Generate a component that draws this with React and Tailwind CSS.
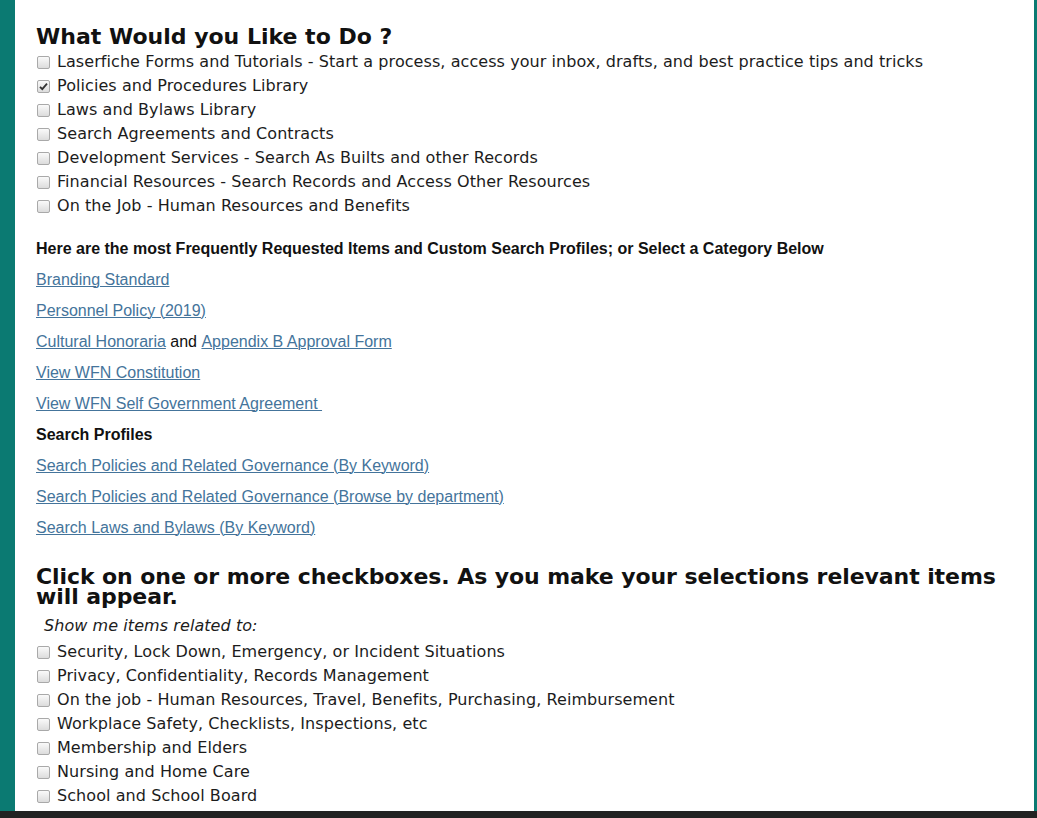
import React from "react";

const verdana = { fontFamily: '"DejaVu Sans", Verdana, sans-serif' };

function Box({ checked }) {
  return (
    <span className="relative mr-[7px] inline-block h-[13px] w-[13px] shrink-0 rounded-[2px] border border-[#a9a9a9] bg-gradient-to-b from-[#fafafa] to-[#dcdcdc]">
      {checked && (
        <svg viewBox="0 0 13 13" className="absolute left-[-1px] top-[-1px] h-[13px] w-[13px]">
          <path d="M3 6.8 L5.3 9.2 L10 3.6" fill="none" stroke="#333" strokeWidth="1.8" />
        </svg>
      )}
    </span>
  );
}

function Row({ children, checked }) {
  return (
    <div className="flex h-[24px] items-center pl-[1px] font-['DejaVu_Sans',sans-serif] text-[16px] tracking-[0.07px] text-[#1c1c1c]">
      <Box checked={checked} />
      <span className="whitespace-nowrap">{children}</span>
    </div>
  );
}

function L({ children }) {
  return <a href="#" className="text-[#44749b] underline decoration-1 underline-offset-[1px]">{children}</a>;
}

function LinkRow({ children }) {
  return <div className="flex h-[31px] items-center whitespace-nowrap">{children}</div>;
}

export default function App() {
  const top = [
    "Laserfiche Forms and Tutorials - Start a process, access your inbox, drafts, and best practice tips and tricks",
    "Policies and Procedures Library",
    "Laws and Bylaws Library",
    "Search Agreements and Contracts",
    "Development Services - Search As Builts and other Records",
    "Financial Resources - Search Records and Access Other Resources",
    "On the Job - Human Resources and Benefits",
  ];
  const bottom = [
    "Security, Lock Down, Emergency, or Incident Situations",
    "Privacy, Confidentiality, Records Management",
    "On the job - Human Resources, Travel, Benefits, Purchasing, Reimbursement",
    "Workplace Safety, Checklists, Inspections, etc",
    "Membership and Elders",
    "Nursing and Home Care",
    "School and School Board",
  ];
  return (
    <div className="flex h-[818px] w-[1037px] flex-col overflow-hidden bg-[#0b7a72]">
      <div className="flex flex-1">
        <div className="w-[15px] shrink-0 bg-[#0b7a72]" />
        <div className="flex-1 bg-white pl-[21px] pt-[27px]">
          <h1 className="h-[20px] text-[22px] font-bold leading-[20px] text-[#111]" style={verdana}>
            What Would you Like to Do ?
          </h1>
          <div className="mt-[3px]">
            {top.map((t, i) => (
              <Row key={i} checked={i === 1}>{t}</Row>
            ))}
          </div>
          <div className="mt-[15px] font-['Liberation_Sans',Arial,sans-serif] text-[16px] text-[#111]">
            <LinkRow>
              <span className="font-bold">Here are the most Frequently Requested Items and Custom Search Profiles; or Select a Category Below</span>
            </LinkRow>
            <LinkRow><L>Branding Standard</L></LinkRow>
            <LinkRow><L>Personnel Policy (2019)</L></LinkRow>
            <LinkRow>
              <L>Cultural Honoraria</L>
              <span className="whitespace-pre"> and </span>
              <L>Appendix B Approval Form</L>
            </LinkRow>
            <LinkRow><L>View WFN Constitution</L></LinkRow>
            <LinkRow><L>View WFN Self Government Agreement&nbsp;</L></LinkRow>
            <LinkRow><span className="font-bold">Search Profiles</span></LinkRow>
            <LinkRow><L>Search Policies and Related Governance (By Keyword)</L></LinkRow>
            <LinkRow><L>Search Policies and Related Governance (Browse by department)</L></LinkRow>
            <LinkRow><L>Search Laws and Bylaws (By Keyword)</L></LinkRow>
          </div>
          <h2 className="mt-[24px] w-[975px] text-[22px] font-bold leading-[20px] tracking-[-0.08px] text-[#111]" style={verdana}>
            Click on one or more checkboxes. As you make your selections relevant items will appear.
          </h2>
          <div className="mt-[7px] flex h-[24px] items-center pl-[8px] text-[16px] italic tracking-[0.07px] text-[#1c1c1c]" style={verdana}>
            Show me items related to:
          </div>
          <div className="mt-[2px]">
            {bottom.map((t, i) => (
              <Row key={i}>{t}</Row>
            ))}
          </div>
        </div>
        <div className="w-[3px] shrink-0 bg-[#0b7a72]" />
      </div>
      <div className="h-[7px] shrink-0 bg-[#222]" />
    </div>
  );
}
